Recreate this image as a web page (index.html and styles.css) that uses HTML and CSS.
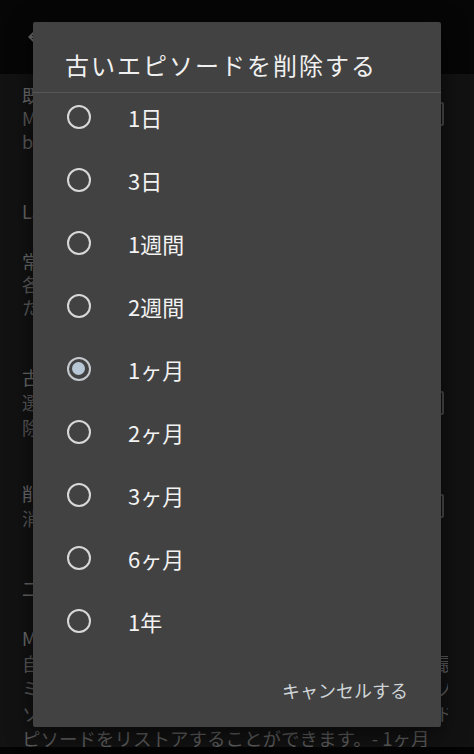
FILE: index.html
```html
<!DOCTYPE html>
<html lang="ja">
<head>
    <meta charset="UTF-8">
    <title>古いエピソードを削除する</title>
    <link rel="stylesheet" href="styles.css">
</head>
<body>
    <div class="screen">
        <header class="appbar">
            <svg class="back" width="24" height="24" viewBox="0 0 24 24">
                <path d="M20 11H7.83l5.59-5.59L12 4l-8 8 8 8 1.41-1.41L7.83 13H20v-2z" fill="#6a6a6a"/>
            </svg>
            <span class="appbar-title">エピソード設定</span>
        </header>

        <main class="settings">
            <!-- item 1 -->
            <div class="pref pref-first">
                <div class="pref-line pref-title">既読エピソードを自動的に削除する</div>
                <div class="pref-line">Mark episodes as played when deleted</div>
                <div class="pref-line">backlog</div>
                <span class="check"></span>
            </div>

            <div class="group-title group-l">Latest episodes</div>

            <div class="pref pref-third">
                <div class="pref-line pref-title">常にダウンロード済みを保持</div>
                <div class="pref-line">各ポッドキャストのダウンロード済みエピソード</div>
                <div class="pref-line">た</div>
            </div>
            <div class="divider div-a"></div>

            <div class="pref pref-wide pref-fourth">
                <div class="pref-line pref-title">古いエピソードを削除する</div>
                <div class="pref-line">選択した期間より古いエピソードを自動的に削</div>
                <div class="pref-line">除します</div>
                <span class="check"></span>
            </div>
            <div class="divider div-b"></div>

            <div class="pref pref-wide pref-fifth">
                <div class="pref-line pref-title">削除したエピソードを保持</div>
                <div class="pref-line">消去したエピソードをリストに表示する</div>
                <span class="check"></span>
            </div>

            <div class="group-title group-two">二次ストレージ</div>

            <div class="pref pref-wide pref-last">
                <div class="pref-line pref-title">Max episodes per podcast</div>
                <div class="pref-line">自動的に削除されるまでに保存されるエピソードの最大数。ダ</div>
                <div class="pref-line">ミー項目はゴミ箱に移動されます。削除されたエピソードはプ</div>
                <div class="pref-line">ソードの設定画面からいつでも削除済みのエピソードにアクセスし</div>
                <div class="pref-line">ピソードをリストアすることができます。- 1ヶ月</div>
            </div>
        </main>

        <footer class="navbar"></footer>

        <div class="dialog">
            <div class="dialog-title">古いエピソードを削除する</div>
            <div class="options">
                <div class="option"><span class="radio"></span><span class="label">1日</span></div>
                <div class="option"><span class="radio"></span><span class="label">3日</span></div>
                <div class="option"><span class="radio"></span><span class="label">1週間</span></div>
                <div class="option"><span class="radio"></span><span class="label">2週間</span></div>
                <div class="option"><span class="radio checked"></span><span class="label">1ヶ月</span></div>
                <div class="option"><span class="radio"></span><span class="label">2ヶ月</span></div>
                <div class="option"><span class="radio"></span><span class="label">3ヶ月</span></div>
                <div class="option"><span class="radio"></span><span class="label">6ヶ月</span></div>
                <div class="option"><span class="radio"></span><span class="label">1年</span></div>
            </div>
            <div class="actions">
                <span class="cancel">キャンセルする</span>
            </div>
        </div>
    </div>
</body>
</html>
```

FILE: styles.css
```css
body {
    margin: 0;
    padding: 0;
    background-color: #050505;
    font-family: "Noto Sans CJK JP", "Noto Sans", sans-serif;
}

.screen {
    position: relative;
    width: 474px;
    height: 754px;
    overflow: hidden;
    display: flex;
    flex-direction: column;
}

/* top bar */
.appbar {
    height: 74px;
    flex-shrink: 0;
    background-color: #060606;
    display: flex;
    align-items: center;
}

.back {
    margin-left: 24px;
}

.appbar-title {
    margin-left: 30px;
    font-size: 20px;
    color: #6a6a6a;
}

/* settings list behind the dialog */
.settings {
    height: 673px;
    flex-shrink: 0;
    background-color: #121212;
    overflow: hidden;
    display: flex;
    flex-direction: column;
}

.pref {
    position: relative;
    padding: 0 26px 0 22px;
}

.pref-line {
    font-size: 18px;
    line-height: 23px;
    color: #5a5a5a;
    white-space: nowrap;
    overflow: hidden;
}

.pref-title {
    color: #6c6c6c;
}

.pref-wide .pref-line {
    line-height: 25px;
}

.pref-first { margin-top: 10px; }
.pref-third { margin-top: 27px; }
.pref-fourth { margin-top: 20px; }
.pref-fifth { margin-top: 22px; }
.pref-last { margin-top: 26px; }

.pref-last .pref-line:last-child {
    font-size: 18.5px;
}

.check {
    position: absolute;
    right: 30px;
    top: 18px;
    width: 20px;
    height: 20px;
    border: 2px solid #4a4a4a;
    border-radius: 2px;
}

.pref-fourth .check { top: 26px; }
.pref-fifth .check { top: 13px; }

.group-title {
    padding: 0 22px;
    font-size: 18px;
    line-height: 23px;
    color: #666;
}

.group-l { margin-top: 47px; }
.group-two { margin-top: 46px; }

.divider {
    height: 1px;
    background-color: #262626;
}

.div-a { margin-top: 26px; }
.div-b { margin-top: 19px; }

.navbar {
    flex: 1;
    background-color: #040404;
}

/* dialog */
.dialog {
    position: absolute;
    left: 33px;
    top: 22px;
    width: 408px;
    height: 705px;
    background-color: #424242;
    border-radius: 2px;
    box-shadow: 0 6px 24px rgba(0, 0, 0, 0.6);
    display: flex;
    flex-direction: column;
}

.dialog-title {
    padding: 27px 0 11px 32px;
    font-size: 24px;
    line-height: 32px;
    letter-spacing: 2px;
    color: #f0f0f0;
    border-bottom: 1px solid #575757;
}

.options {
    margin-top: -8px;
}

.option {
    height: 63px;
    display: flex;
    align-items: center;
    padding-left: 34px;
}

.radio {
    position: relative;
    width: 24px;
    height: 24px;
    box-sizing: border-box;
    border: 2.5px solid #d8d8d8;
    border-radius: 50%;
    flex-shrink: 0;
}

.radio.checked {
    border-color: #c4c9ce;
}

.radio.checked::after {
    content: "";
    position: absolute;
    left: 3px;
    top: 3px;
    width: 13px;
    height: 13px;
    border-radius: 50%;
    background-color: #b8c7d6;
}

.label {
    margin-left: 37px;
    font-size: 22px;
    color: #f2f2f2;
}

.actions {
    margin-top: 26px;
    display: flex;
    justify-content: flex-end;
    padding-right: 33px;
}

.cancel {
    font-size: 18px;
    line-height: 24px;
    color: #cfd4d8;
}
```
